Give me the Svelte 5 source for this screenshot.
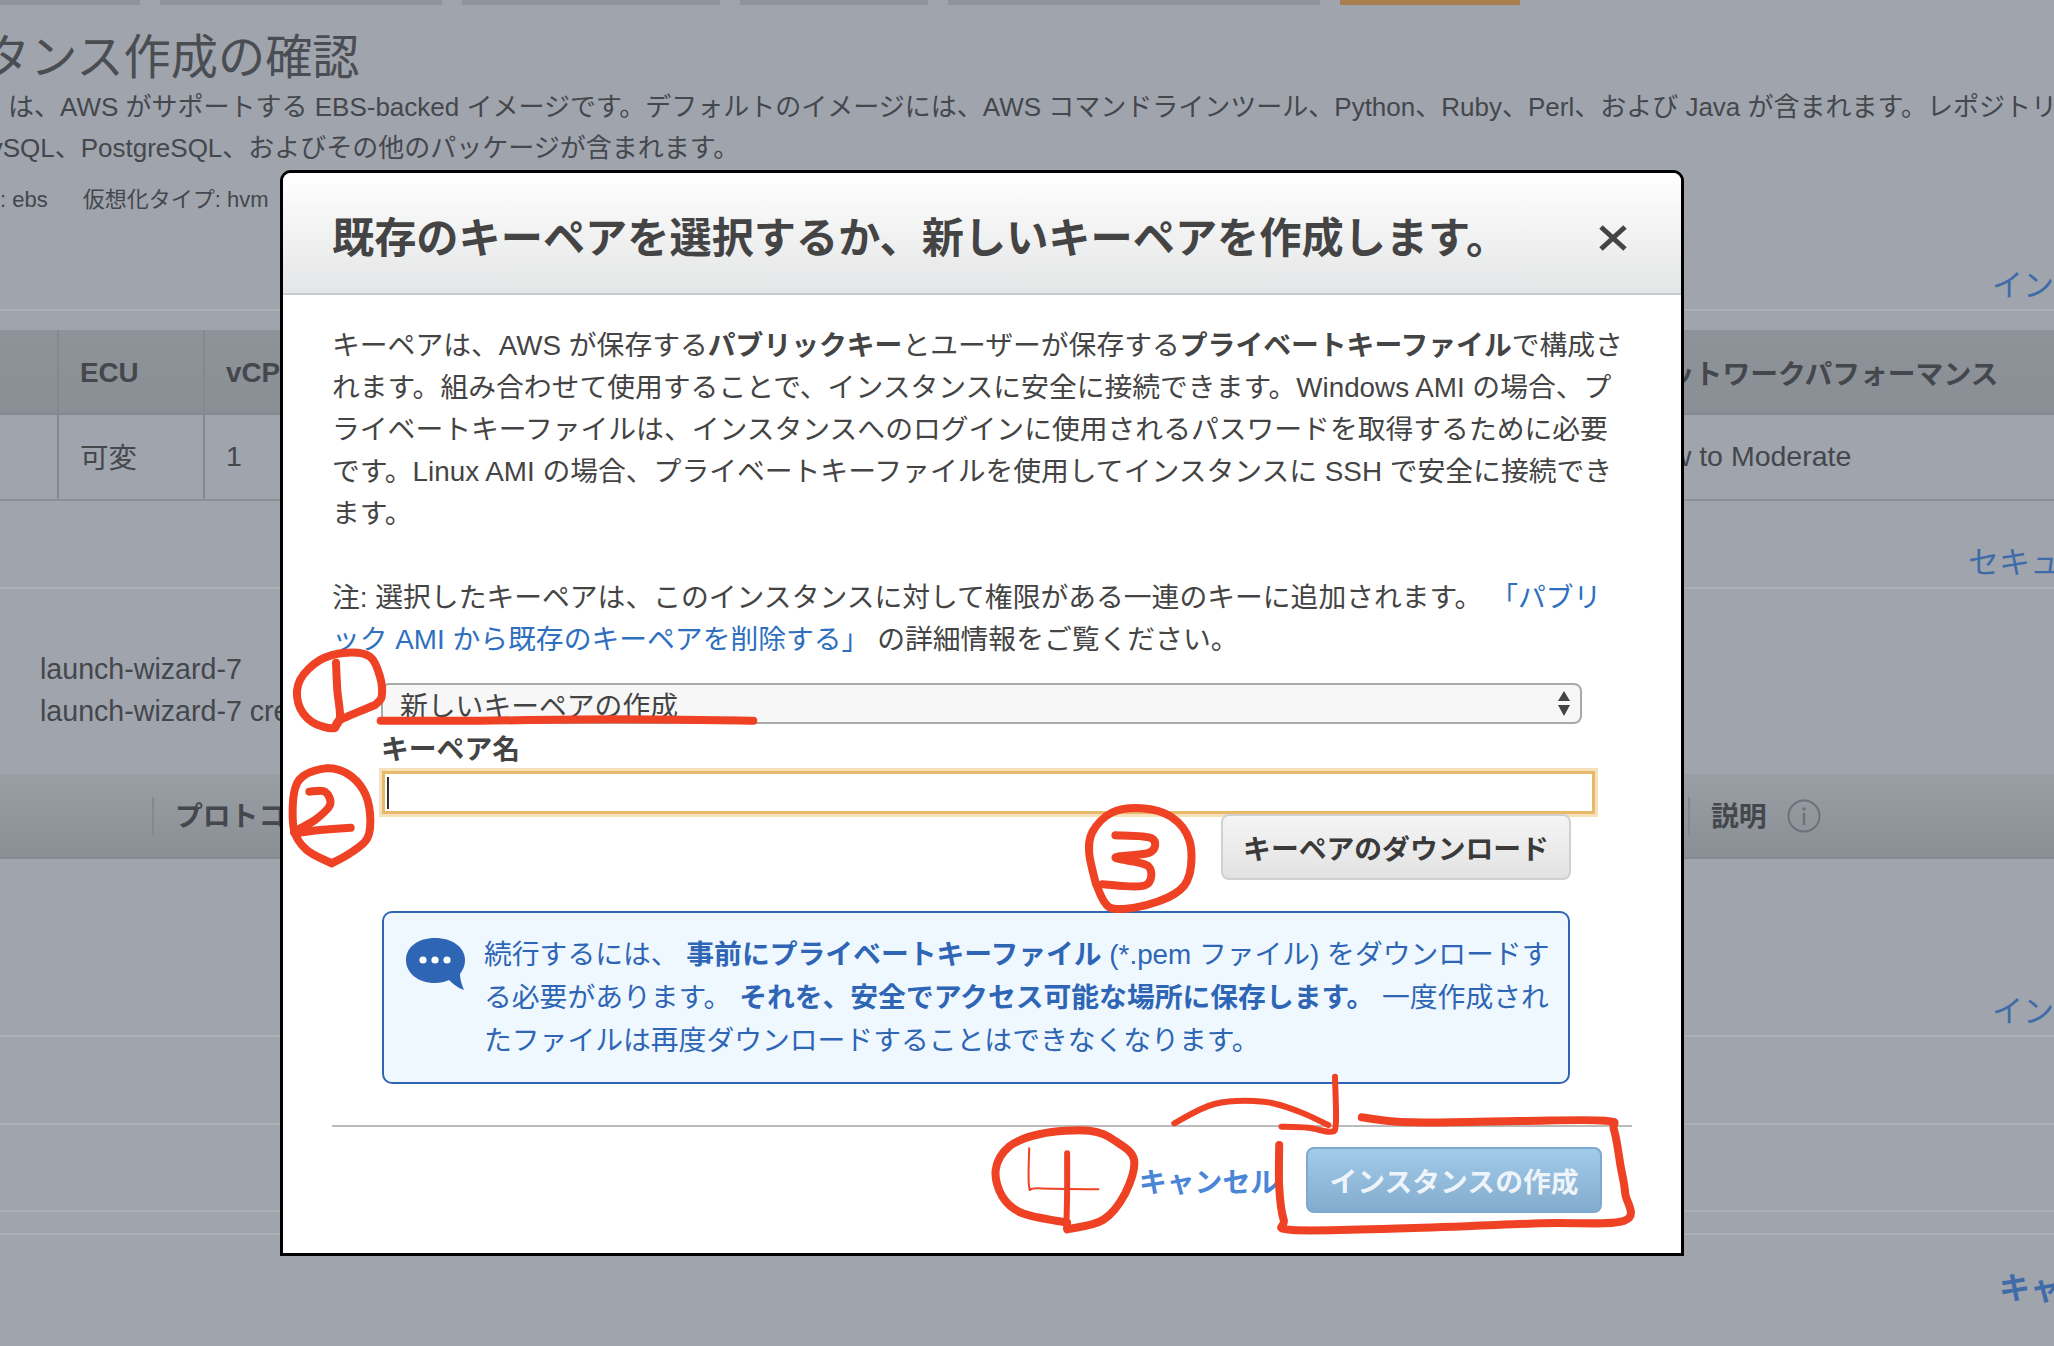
<script>
  const tabs = [
    { w: 140 }, { w: 282 }, { w: 258 }, { w: 188 }, { w: 372 }, { w: 180, on: true }
  ];

  // catmull-rom through hand-picked points, good enough for marker strokes
  function smooth(pts) {
    let d = `M${pts[0][0]} ${pts[0][1]}`;
    for (let i = 0; i < pts.length - 1; i++) {
      const p0 = pts[i - 1] || pts[i];
      const p1 = pts[i];
      const p2 = pts[i + 1];
      const p3 = pts[i + 2] || p2;
      const c1 = [p1[0] + (p2[0] - p0[0]) / 6, p1[1] + (p2[1] - p0[1]) / 6];
      const c2 = [p2[0] - (p3[0] - p1[0]) / 6, p2[1] - (p3[1] - p1[1]) / 6];
      d += ` C${c1[0].toFixed(1)} ${c1[1].toFixed(1)} ${c2[0].toFixed(1)} ${c2[1].toFixed(1)} ${p2[0].toFixed(1)} ${p2[1].toFixed(1)}`;
    }
    return d;
  }

  const z5 = (p) => p.map(([x, y]) => [280 + x / 3, 650 + y / 3]);
  const z4 = (p) => p.map(([x, y]) => [1027 + x / 1.527, 673 + y / 2.33]);
  const z6 = (p) => p.map(([x, y]) => [960 + x / 2.24, 1060 + y / 3]);

  const marks = [
    // 1
    { w: 8, d: z5([[285,165],[180,210],[160,235],[95,215],[55,160],[60,90],[120,30],[200,8],[270,20],[300,80],[305,140],[285,165]]) },
    { w: 8, d: z5([[168,38],[172,120],[180,200],[165,232]]) },
    { w: 8, d: z5([[302,212],[600,212],[1000,208],[1420,212]]) },
    // 2
    { w: 8, d: z5([[155,640],[210,610],[262,565],[270,490],[250,420],[200,370],[140,355],[70,378],[42,430],[42,540],[80,600],[155,640]]) },
    { w: 8, d: z5([[88,425],[135,425],[150,465],[105,510],[42,548],[120,540],[212,533]]) },
    // 3
    { w: 8, d: z4([[105,490],[95,420],[100,370],[130,325],[175,315],[220,335],[248,390],[248,470],[225,515],[170,545],[125,545],[105,490]]) },
    { w: 8, d: z4([[135,378],[190,385],[188,418],[135,430],[185,450],[180,495],[115,492]]) },
    // 4
    { w: 8, d: z6([[240,508],[320,480],[370,400],[390,300],[350,245],[290,212],[180,222],[110,260],[80,330],[95,410],[140,460],[240,488]]) },
    { w: 2, d: z6([[155,265],[155,380],[175,385],[310,388]]) },
    { w: 6, d: z6([[240,280],[240,400],[238,505]]) },
    // arrow into the button
    { w: 6, d: z6([[480,190],[570,132],[680,125],[760,155],[825,195]]) },
    { w: 6, d: z6([[720,200],[780,203],[830,215],[842,190],[840,50]]) },
    // box round the button
    { w: 8, d: z6([[900,172],[1010,187],[1250,183],[1445,182],[1465,210],[1480,320],[1490,400],[1488,482],[1300,490],[1000,505],[745,510],[725,480],[715,380],[715,255]]) }
  ];
</script>

<div class="page">
  <div class="bg">
    <div class="tabs">
      {#each tabs as t}
        <span class="tab" class:on={t.on} style="width:{t.w}px"></span>
      {/each}
    </div>
    <h1>タンス作成の確認</h1>
    <p class="intro first">は、AWS がサポートする EBS-backed イメージです。デフォルトのイメージには、AWS コマンドラインツール、Python、Ruby、Perl、および Java が含まれます。レポジトリには</p>
    <p class="intro second">MySQL、PostgreSQL、およびその他のパッケージが含まれます。</p>
    <div class="meta"><span>: ebs</span><span>仮想化タイプ: hvm</span></div>

    <div class="edit-row sec1"><a class="link">インスタンスタイプの編集</a></div>

    <div class="grid">
      <div class="th cell"></div>
      <div class="th cell pad">ECU</div>
      <div class="th pad">vCPU</div>
      <div class="th">ネットワークパフォーマンス</div>
      <div class="td cell"></div>
      <div class="td cell pad cjk">可変</div>
      <div class="td pad">1</div>
      <div class="td">Low to Moderate</div>
    </div>

    <div class="edit-row sec2"><a class="link wide">セキュリティグループの編集</a></div>

    <div class="groups">
      <div>launch-wizard-7</div>
      <div>launch-wizard-7 created</div>
    </div>

    <div class="grid2">
      <div></div>
      <div class="col"><i></i><b>プロトコル</b></div>
      <div class="col"><i></i><b>説明</b>
        <svg class="info" width="34" height="34" viewBox="0 0 34 34" aria-hidden="true">
          <circle cx="17" cy="17" r="15.5" fill="none" stroke="#6d7178" stroke-width="2" />
          <circle cx="17" cy="10" r="1.8" fill="#6d7178" />
          <rect x="15.8" y="14" width="2.4" height="12" fill="#6d7178" />
        </svg>
      </div>
    </div>

    <div class="edit-row sec3"><a class="link">インスタンスの詳細の編集</a></div>
    <div class="rule r2"></div>
    <div class="rule r3"></div>
    <div class="rule r4"></div>
    <div class="edit-row sec4"><a class="link strong">キャンセル</a></div>
  </div>

  <div class="modal">
    <header>
      <h2>既存のキーペアを選択するか、新しいキーペアを作成します。</h2>
      <svg class="close" width="30" height="26" viewBox="0 0 30 26" aria-hidden="true">
        <path d="M3 2 L27 24 M27 2 L3 24" stroke="#444" stroke-width="5" fill="none" />
      </svg>
    </header>
    <div class="body">
      <p class="txt">キーペアは、AWS が保存する<b>パブリックキー</b>とユーザーが保存する<b>プライベートキーファイル</b>で構成さ<br />れます。組み合わせて使用することで、インスタンスに安全に接続できます。Windows AMI の場合、プ<br />ライベートキーファイルは、インスタンスへのログインに使用されるパスワードを取得するために必要<br />です。Linux AMI の場合、プライベートキーファイルを使用してインスタンスに SSH で安全に接続でき<br />ます。</p>
      <p class="txt note">注: 選択したキーペアは、このインスタンスに対して権限がある一連のキーに追加されます。 <a>「パブリ<br />ック AMI から既存のキーペアを削除する」</a> の詳細情報をご覧ください。</p>

      <div class="form">
        <div class="select">
          <span>新しいキーペアの作成</span>
          <svg width="14" height="26" viewBox="0 0 14 26" aria-hidden="true">
            <path d="M7 0 L13 10 L1 10 Z M1 14 L13 14 L7 25 Z" fill="#444" />
          </svg>
        </div>
        <div class="label">キーペア名</div>
        <div class="input"><span class="caret"></span></div>
        <div class="dl-row"><button class="dl">キーペアのダウンロード</button></div>

        <div class="alert">
          <svg class="bubble" width="62" height="54" viewBox="0 0 62 54" aria-hidden="true">
            <path d="M30 1 C47 1 60 10 60 23 C60 30 57 34 55 37 C55 43 57 48 59 53 C53 51 48 47 44 43 C40 45 35 46 30 46 C13 46 1 36 1 23 C1 10 13 1 30 1 Z" fill="#2e66b5" />
            <circle cx="18" cy="23" r="3.6" fill="#fff" />
            <circle cx="30" cy="23" r="3.6" fill="#fff" />
            <circle cx="42" cy="23" r="3.6" fill="#fff" />
          </svg>
          <p>続行するには、 <b>事前にプライベートキーファイル</b> (*.pem ファイル) をダウンロードす<br />る必要があります。 <b>それを、安全でアクセス可能な場所に保存します。</b> 一度作成され<br />たファイルは再度ダウンロードすることはできなくなります。</p>
        </div>
      </div>

      <footer>
        <a class="cancel">キャンセル</a>
        <button class="launch">インスタンスの作成</button>
      </footer>
    </div>
  </div>

  <svg class="marks" width="2054" height="1346" viewBox="0 0 2054 1346" aria-hidden="true">
    {#each marks as m}
      <path d={smooth(m.d)} fill="none" stroke="#ef4123" stroke-width={m.w} stroke-linecap="round" stroke-linejoin="round" />
    {/each}
  </svg>
</div>

<style>
  :global(body) {
    margin: 0;
  }
  .page {
    position: relative;
    width: 2054px;
    height: 1346px;
    overflow: hidden;
    background: #a0a4ac;
    font-family: "Liberation Sans", "Noto Sans CJK JP", sans-serif;
    font-size: 27.8px;
    color: #44474c;
  }
  p, h1, h2 {
    margin: 0;
  }
  a {
    color: #2e66b5;
  }

  /* dimmed page behind the dialog */
  .bg {
    display: flex;
    flex-direction: column;
    white-space: nowrap;
  }
  .tabs {
    display: flex;
    gap: 20px;
    height: 5px;
    margin-bottom: 1px;
  }
  .tab {
    background: #8f939b;
  }
  .tab.on {
    background: #a97f4f;
  }
  h1 {
    margin: 27px 0 0 -17px;
    font-size: 47.2px;
    font-weight: 400;
    line-height: 50px;
    color: #4a4d52;
  }
  .intro {
    line-height: 41px;
    font-size: 26px;
  }
  .intro.first {
    margin: 4px 0 0 8px;
  }
  .intro.second {
    margin-left: -32px;
  }
  .meta {
    display: flex;
    gap: 35px;
    margin-top: 16px;
    font-size: 22px;
    line-height: 30px;
  }
  .edit-row {
    display: flex;
    align-items: flex-end;
    line-height: 40px;
  }
  .link {
    margin-left: 1992px;
    font-size: 31px;
    color: #3f6ca8;
  }
  .link.wide {
    margin-left: 1968px;
  }
  .sec1 {
    height: 91px;
    padding-bottom: 3px;
    border-bottom: 2px solid #acafb5;
  }
  .grid {
    display: grid;
    grid-template-columns: 59px 146px 1434px 1fr;
    grid-template-rows: 85px 84px;
    margin-top: 19px;
    border-bottom: 2px solid #8b8f96;
  }
  .th, .td {
    display: flex;
    align-items: center;
    box-sizing: border-box;
  }
  .th {
    font-weight: 700;
    background: linear-gradient(#8e9299, #8a8e95);
    border-bottom: 2px solid #85898f;
  }
  .th.pad {
    padding-top: 3px;
  }
  .td {
    font-size: 28.5px;
    padding-bottom: 1px;
  }
  .td.cjk {
    padding-bottom: 4px;
  }
  .cell {
    border-right: 2px solid #84888f;
  }
  .pad {
    padding-left: 21px;
  }
  .sec2 {
    height: 82px;
    padding-bottom: 4px;
    border-bottom: 2px solid #acafb5;
  }
  .groups {
    margin: 59px 0 0 40px;
    font-size: 28.6px;
    line-height: 42px;
  }
  .grid2 {
    display: grid;
    grid-template-columns: 152px 1536px 1fr;
    height: 83px;
    margin-top: 42px;
    background: linear-gradient(#9a9ea5, #8a8e95);
    border-bottom: 2px solid #85898f;
  }
  .col {
    display: flex;
    align-items: center;
  }
  .col b {
    padding-bottom: 3px;
  }
  .col i {
    width: 2px;
    height: 38px;
    margin-right: 21px;
    background: #84888f;
  }
  .info {
    margin-left: 20px;
  }
  .sec3 {
    height: 173px;
    padding-bottom: 3px;
    border-bottom: 2px solid #acafb5;
  }
  .rule {
    border-bottom: 2px solid #acafb5;
    flex: none;
  }
  .r2 { height: 86px; }
  .r3 { height: 85px; }
  .r4 { height: 21px; }
  .sec4 {
    height: 74px;
  }
  .link.strong {
    margin-left: 1999px;
    font-weight: 700;
  }

  /* dialog */
  .modal {
    position: absolute;
    left: 280px;
    top: 170px;
    width: 1404px;
    height: 1086px;
    box-sizing: border-box;
    border: 3px solid #000;
    border-radius: 11px 11px 0 0;
    background: #fff;
    color: #444;
  }
  header {
    display: flex;
    align-items: center;
    justify-content: space-between;
    box-sizing: border-box;
    height: 122px;
    padding: 0 54px 0 49px;
    border-radius: 8px 8px 0 0;
    background: linear-gradient(#fff, #e4e5e6);
    border-bottom: 2px solid #c9cacc;
  }
  h2 {
    font-size: 42.2px;
    font-weight: 700;
    white-space: nowrap;
    padding-top: 2px;
  }
  .close {
    margin: 10px -1px 0 0;
  }
  .body {
    padding: 30px 49px 0;
  }
  .txt {
    line-height: 42px;
    white-space: nowrap;
  }
  .note {
    margin-top: 42px;
  }
  .note a {
    color: #2e6fc0;
  }
  .form {
    width: 1190px;
    margin: 22px 0 0 49px;
  }
  .select {
    display: flex;
    align-items: center;
    justify-content: space-between;
    box-sizing: border-box;
    width: 1201px;
    height: 41px;
    padding: 0 9px 0 17px;
    border: 2px solid #a9a9a9;
    border-radius: 8px;
    background: #f7f7f7;
  }
  .label {
    margin-top: 8px;
    font-weight: 700;
    line-height: 36px;
  }
  .input {
    display: flex;
    align-items: center;
    box-sizing: border-box;
    width: 1213px;
    height: 43px;
    margin: 3px 0 0 1px;
    padding-left: 2px;
    border: 3px solid #e8b96a;
    background: #fff;
    box-shadow: 0 0 0 3px rgba(240, 205, 140, 0.6);
  }
  .caret {
    width: 2px;
    height: 32px;
    background: #333;
  }
  .dl-row {
    display: flex;
    justify-content: flex-end;
  }
  button {
    font: inherit;
    font-weight: 700;
    box-sizing: border-box;
    padding: 0;
    border-radius: 8px;
  }
  .dl {
    width: 350px;
    height: 66px;
    color: #3a3a3a;
    border: 2px solid #d0d0d0;
    background: linear-gradient(#f5f5f5, #e2e2e2);
  }
  .alert {
    display: flex;
    box-sizing: border-box;
    width: 1188px;
    height: 173px;
    margin: 31px 0 0 1px;
    padding: 20px 0 0 21px;
    border: 2px solid #2e66b5;
    border-radius: 10px;
    background: #f0f8ff;
    color: #2e66b5;
  }
  .bubble {
    flex: none;
    margin-top: 4px;
  }
  .alert p {
    margin-left: 17px;
    line-height: 43px;
    white-space: nowrap;
  }
  footer {
    display: flex;
    justify-content: flex-end;
    align-items: center;
    gap: 28px;
    margin-top: 41px;
    padding: 20px 30px 0 0;
    border-top: 2px solid #bbb;
  }
  .cancel {
    font-weight: 700;
    color: #4a86d8;
  }
  .launch {
    width: 296px;
    height: 66px;
    color: #eef4fa;
    border: 2px solid #7da8cf;
    background: linear-gradient(#a2cbea, #82abcd);
  }

  /* hand-drawn annotations sit on top of everything */
  .marks {
    position: absolute;
    inset: 0;
    pointer-events: none;
  }
</style>
